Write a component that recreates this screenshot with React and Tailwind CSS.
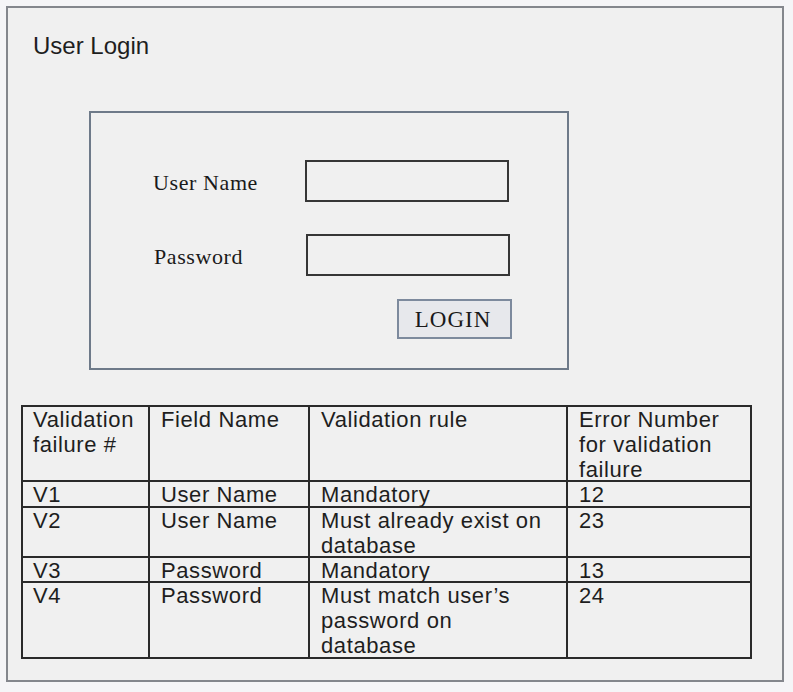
export default function App() {
  const serif = { fontFamily: '"Liberation Serif", "Times New Roman", serif' };
  const rows = [
    ["V1", "User Name", ["Mandatory"], "12"],
    ["V2", "User Name", ["Must already exist on", "database"], "23"],
    ["V3", "Password", ["Mandatory"], "13"],
    ["V4", "Password", ["Must match user\u2019s", "password on", "database"], "24"],
  ];
  const heights = ["h-[26px]", "h-[50px]", "h-[25px]", "h-[74px]"];
  return (
    <div className="w-[793px] h-[692px] bg-[#f5f5f7] pt-[6px] pl-[6px] overflow-hidden" style={{ fontFamily: '"Liberation Sans", Arial, sans-serif' }}>
      <div className="w-[778px] h-[676px] border-2 border-[#84878d] bg-[#f0f0f0] flex flex-col">
        <div className="ml-[25px] mt-[24px] text-[24px] leading-[28px] text-[#1e1e1e]">User Login</div>

        <div className="ml-[81px] mt-[51px] w-[480px] h-[259px] border-2 border-[#6e7a89] pl-[62px] pt-[47px] flex flex-col text-[#1a1a1a]" style={serif}>
          <div className="flex items-center h-[42px]">
            <div className="w-[152px] text-[22px] leading-[24px] tracking-[0.6px] pt-[3px]">User Name</div>
            <div className="w-[204px] h-[42px] border-2 border-[#363636]" />
          </div>
          <div className="flex items-center h-[42px] mt-[32px]">
            <div className="w-[153px] text-[22px] leading-[24px] tracking-[0.6px] pl-[1px] pt-[3px]">Password</div>
            <div className="w-[204px] h-[42px] border-2 border-[#363636]" />
          </div>
          <div className="ml-[244px] mt-[23px] w-[115px] h-[40px] border-2 border-[#7d8a9d] bg-[#e7e8ec] flex items-center justify-center text-[23px] tracking-[1px] leading-[24px] pt-[2px] pr-[3px]">
            LOGIN
          </div>
        </div>

        <div className="ml-[13px] mt-[35px] w-[731px] border-2 border-[#2a2a2a] text-[22px] leading-[25px] tracking-[0.6px] text-[#1e1e1e] grid grid-cols-[127px_160px_258px_182px]">
          <div className="h-[75px] border-r-2 border-b-2 border-[#2a2a2a] pl-[10px]">Validation<br />failure #</div>
          <div className="h-[75px] border-r-2 border-b-2 border-[#2a2a2a] pl-[11px]">Field Name</div>
          <div className="h-[75px] border-r-2 border-b-2 border-[#2a2a2a] pl-[11px]">Validation rule</div>
          <div className="h-[75px] border-b-2 border-[#2a2a2a] pl-[11px] whitespace-nowrap">Error Number<br />for validation<br />failure</div>
          {rows.map((r, i) => {
            const last = i === rows.length - 1;
            const b = last ? "" : " border-b-2";
            return [
              <div key={i + "a"} className={heights[i] + " border-r-2 border-[#2a2a2a] pl-[10px] whitespace-nowrap" + b}>{r[0]}</div>,
              <div key={i + "b"} className={heights[i] + " border-r-2 border-[#2a2a2a] pl-[11px] whitespace-nowrap" + b}>{r[1]}</div>,
              <div key={i + "c"} className={heights[i] + " border-r-2 border-[#2a2a2a] pl-[11px] whitespace-nowrap" + b}>
                {r[2].map((t, j) => (
                  <div key={j}>{t}</div>
                ))}
              </div>,
              <div key={i + "d"} className={heights[i] + " border-[#2a2a2a] pl-[11px] whitespace-nowrap" + b}>{r[3]}</div>,
            ];
          })}
        </div>
      </div>
    </div>
  );
}
